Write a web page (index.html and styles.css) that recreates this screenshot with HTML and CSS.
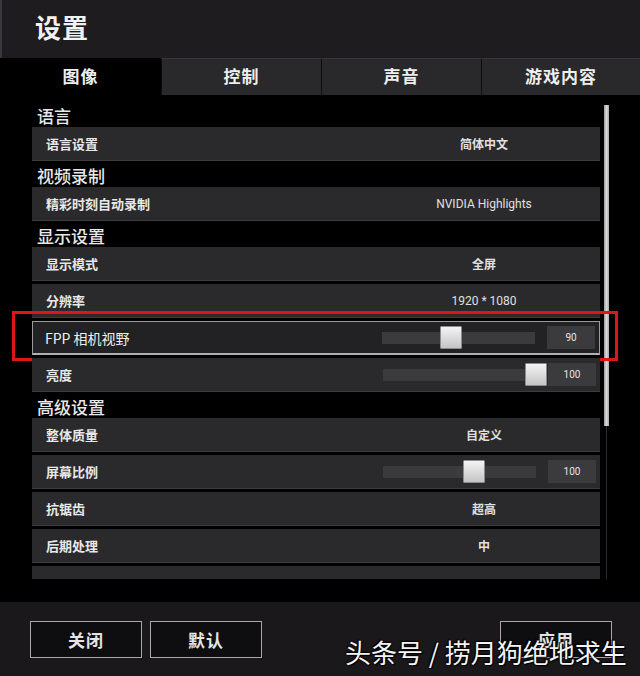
FILE: index.html
```html
<!DOCTYPE html>
<html lang="zh">
<head>
<meta charset="utf-8">
<title>设置</title>
<link rel="stylesheet" href="styles.css">
</head>
<body>
<div class="app">
  <header class="header"><h1 class="title">设置</h1></header>
  <nav class="tabs">
    <div class="tab active">图像</div>
    <div class="tab">控制</div>
    <div class="tab">声音</div>
    <div class="tab">游戏内容</div>
  </nav>
  <main class="main">
    <div class="list">
      <div class="section">语言</div>
      <div class="row"><span class="label">语言设置</span><span class="value">简体中文</span></div>
      <div class="section">视频录制</div>
      <div class="row"><span class="label">精彩时刻自动录制</span><span class="value latin">NVIDIA Highlights</span></div>
      <div class="section">显示设置</div>
      <div class="row"><span class="label">显示模式</span><span class="value">全屏</span></div>
      <div class="row"><span class="label">分辨率</span><span class="value latin">1920 * 1080</span></div>
      <div class="row row-focus">
        <span class="label label-light">FPP 相机视野</span>
        <span class="slider">
          <span class="track"><span class="thumb" style="left:58px"></span></span>
          <span class="num">90</span>
        </span>
        <span class="mark"></span>
      </div>
      <div class="row"><span class="label">亮度</span>
        <span class="slider">
          <span class="track"><span class="thumb" style="left:142px"></span></span>
          <span class="num">100</span>
        </span>
      </div>
      <div class="section">高级设置</div>
      <div class="row"><span class="label">整体质量</span><span class="value">自定义</span></div>
      <div class="row"><span class="label">屏幕比例</span>
        <span class="slider">
          <span class="track"><span class="thumb" style="left:80px"></span></span>
          <span class="num">100</span>
        </span>
      </div>
      <div class="row"><span class="label">抗锯齿</span><span class="value">超高</span></div>
      <div class="row"><span class="label">后期处理</span><span class="value">中</span></div>
      <div class="row row-cut"></div>
    </div>
    <div class="scroll"><div class="scroll-thumb"></div><div class="scroll-track"></div></div>
  </main>
  <footer class="footer">
    <button class="btn">关闭</button>
    <button class="btn">默认</button>
    <button class="btn btn-apply">应用</button>
    <div class="watermark">头条号 / 捞月狗绝地求生</div>
  </footer>
</div>
</body>
</html>
```
FILE: styles.css
```css
* { box-sizing: border-box; }
html, body { margin: 0; padding: 0; background: #000; }
body {
  font-family: "Noto Sans CJK SC", "Noto Sans", sans-serif;
  color: #e6e6e6;
}
.app { width: 640px; height: 676px; position: relative; overflow: hidden; background: #000; }

.header {
  height: 58px;
  background: #1e1c1f;
  border-left: 2px solid #3a383c;
  padding: 0 0 0 33px;
  display: flex;
  align-items: center;
}
.title {
  margin: 0;
  font-size: 26px;
  line-height: 30px;
  font-weight: 700;
  color: #f2f2f2;
  letter-spacing: 1px;
  margin-top: -4px;
}

.tabs {
  height: 37px;
  display: grid;
  grid-template-columns: 161px 160px 160px 159px;
  background: #000;
}
.tab {
  display: flex;
  align-items: center;
  justify-content: center;
  font-size: 17px;
  font-weight: 700;
  color: #eeeeee;
  background: #29282b;
  border-left: 1px solid #0c0c0c;
  border-top: 1px solid #39373b;
  letter-spacing: 1px;
  padding-bottom: 3px;
}
.tab.active { background: #000; border: none; }

.main {
  height: 507px;
  display: flex;
  padding: 9px 0 0 32px;
  background: #000;
}
.list {
  width: 568px;
  height: 475px;
  clip-path: inset(0 -60px 0 -60px);
}
.section {
  height: 23px;
  line-height: 23px;
  padding-left: 5px;
  font-size: 17px;
  color: #e8e8e8;
  font-weight: 500;
}
.row {
  position: relative;
  height: 34px;
  margin-bottom: 3px;
  background: #2a292c;
  border-bottom: 1px solid #3c3b3e;
  display: grid;
  grid-template-columns: 1fr 232px;
  align-items: center;
}
.row-cut { margin-top: 1px; }
.label {
  padding-left: 14px;
  font-size: 13px;
  font-weight: 700;
  color: #e8e8e8;
}
.label-light { font-weight: 400; font-size: 14px; padding-left: 12px; color: #f0f0f0; }
.value {
  text-align: center;
  font-size: 12px;
  font-weight: 700;
  color: #e0e0e0;
}
.value.latin { font-family: Roboto, "Liberation Sans", sans-serif; font-weight: 400; font-size: 12px; }

.slider {
  display: flex;
  align-items: center;
  padding-left: 15px;
}
.track {
  position: relative;
  width: 153px;
  height: 12px;
  background: #3b3a3d;
}
.thumb {
  position: absolute;
  top: -6px;
  width: 22px;
  height: 23px;
  background: linear-gradient(#f4f4f4, #c4c4c4);
  border: 1px solid #8c8c8c;
  border-radius: 1px;
}
.num {
  margin-left: 12px;
  width: 48px;
  height: 23px;
  background: #3b3a3d;
  font-family: Roboto, "Liberation Sans", sans-serif;
  font-size: 10px;
  color: #e4e4e4;
  display: flex;
  align-items: center;
  justify-content: center;
}

.row-focus {
  background: #222124;
  border: 1px solid #9a9a9a;
  border-bottom: 2px solid #b0b0b0;
}
.mark {
  position: absolute;
  left: -21px;
  right: -19px;
  top: -11px;
  bottom: -8px;
  border: 3px solid #e01616;
  pointer-events: none;
}

.scroll {
  margin-left: 4px;
  margin-top: 1px;
  width: 5px;
  display: flex;
  flex-direction: column;
  align-items: center;
}
.scroll-thumb {
  width: 5px;
  height: 321px;
  background: linear-gradient(90deg, #9a9a9a, #d8d8d8 50%, #a8a8a8);
}
.scroll-track {
  width: 1px;
  height: 153px;
  background: #2c2c2c;
}

.footer {
  height: 74px;
  background: #1a181b;
  display: flex;
  align-items: flex-start;
  padding: 19px 28px 0 30px;
  gap: 8px;
}
.btn {
  width: 112px;
  height: 37px;
  background: #0e0d0f;
  border: 1px solid #a8a8a8;
  color: #e4e4e4;
  font-family: "Noto Sans CJK SC", sans-serif;
  font-size: 17px;
  font-weight: 700;
  letter-spacing: 1px;
  padding: 0;
}
.btn-apply { margin-left: auto; }
.watermark {
  position: absolute;
  left: 345px;
  top: 637px;
  font-size: 26px;
  line-height: 30px;
  color: #f4f4f4;
  white-space: nowrap;
  text-shadow: 0 0 2px #000, 1px 1px 1px #000, -1px -1px 1px #000;
}
```
